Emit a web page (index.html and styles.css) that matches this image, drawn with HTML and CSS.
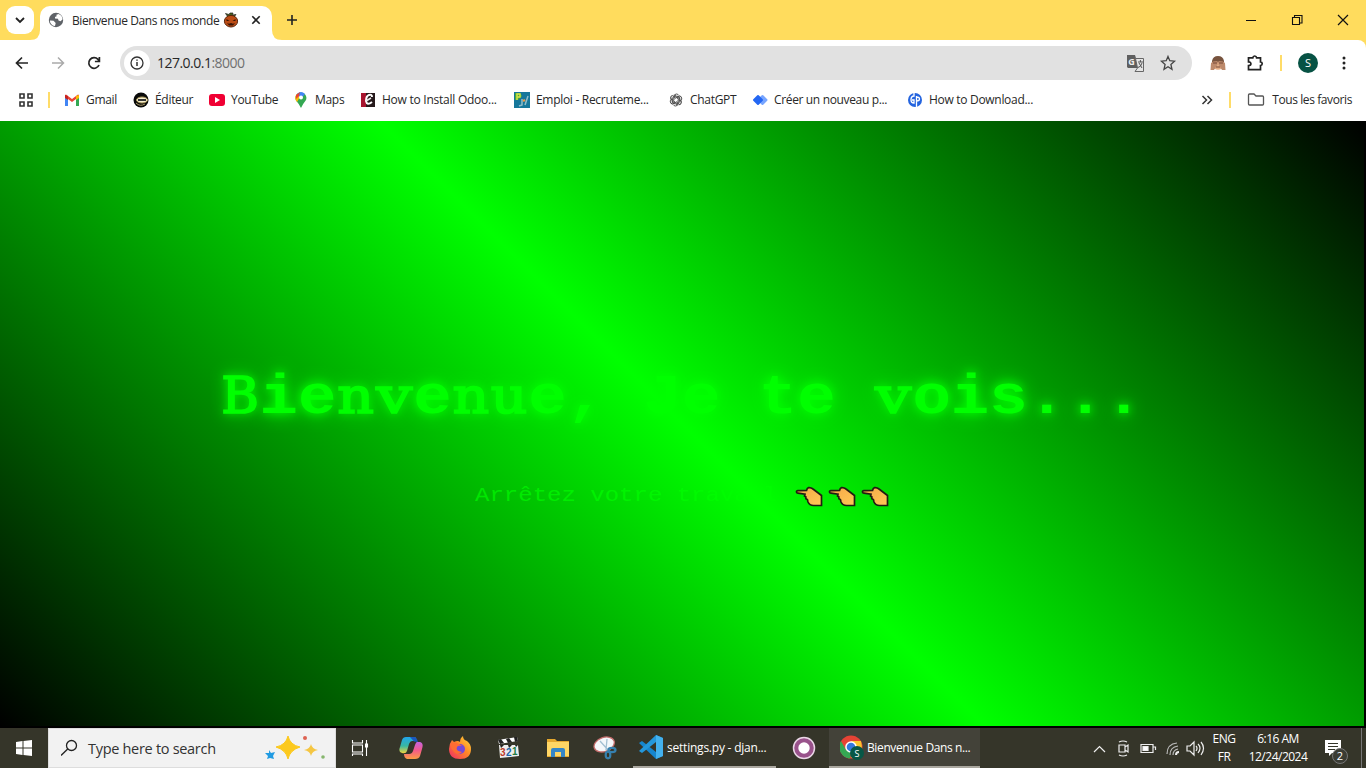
FILE: index.html
```
<!DOCTYPE html>
<html lang="fr">
<head>
<meta charset="utf-8">
<title>Bienvenue Dans nos monde</title>
<link rel="stylesheet" href="styles.css">
</head>
<body>
<div class="screen">
<header class="tabs">
  <div class="tab-search"><svg width="28" height="28" fill="none" stroke="#222" stroke-width="1.8"><path d="M10 12l4 4 4-4"/></svg></div>
  <div class="tab">
    <svg width="16" height="16" viewBox="0 0 16 16"><circle cx="8" cy="8" r="7.2" fill="#5f6368"/><path d="M2 8.5l3.5.2 2.2 2.2-.7 3C4 14 1.800 11 2 8.500zM8 3l2.500-1c3 1 4 3 4 5.500l-2 1.800-2-.8-.5-1.700-3-.3 0-1.500 2-1z" fill="#fff"/></svg>
    <span class="tab-title">Bienvenue Dans nos monde</span>
    <svg class="pumpkin" width="16" height="16" viewBox="0 0 16 16"><path d="M5 5L2.500 1.500 6 2.500 7 1h3l-.5 2 3.500-.5L11 5z" fill="#46601b" stroke="#222" stroke-width=".7"/><ellipse cx="8" cy="9.200" rx="6.600" ry="5.800" fill="#bc4c15" stroke="#59240c"/><path d="M3.500 7l3 2H3.500zM12.500 7l-3 2h3zM4 11l2 .8 2-.8 2 .8 2-.8-2 2.500H6z" fill="#381507"/></svg>
    <svg class="tab-close" width="16" height="16" stroke="#222" stroke-width="1.6"><path d="M4.300 4.300l7.400 7.400M11.700 4.300l-7.400 7.400"/></svg>
    <svg class="curve curve-left" width="10" height="10"><path d="M10 0v10H0Q10 10 10 0" fill="#fff"/></svg>
    <svg class="curve curve-right" width="10" height="10"><path d="M0 0v10h10Q0 10 0 0" fill="#fff"/></svg>
  </div>
  <svg class="new-tab" width="16" height="16" stroke="#222" stroke-width="1.6"><path d="M8 3v10M3 8h10"/></svg>
  <div class="window-buttons">
    <svg width="46" height="40"><path d="M18 20.500h10" stroke="#111"/></svg>
    <svg width="46" height="40" fill="none" stroke="#111" stroke-width="1.100"><path d="M18.500 17.500h7v7h-7zM20.500 17.500v-2h7.500v7.500h-2.500"/></svg>
    <svg width="46" height="40" stroke="#111" stroke-width="1.200"><path d="M18 15l10 10M28 15l-10 10"/></svg>
  </div>
</header>
<nav class="toolbar">
  <svg class="nav-icon" width="36" height="36" fill="none" stroke="#252525" stroke-width="1.700"><path d="M24 18H13M18 12.500L12.500 18l5.500 5.500"/></svg>
  <svg class="nav-icon" width="36" height="36" fill="none" stroke="#aaa" stroke-width="1.500"><path d="M12 18h11M18 12.500l5.500 5.500-5.500 5.500"/></svg>
  <svg class="nav-icon" width="36" height="36" fill="none" stroke="#252525" stroke-width="1.700"><path d="M23 20A5.300 5.300 0 1 1 22 14.400l1 1.300M23.400 12v4.500h-4.500"/></svg>
  <div class="address">
    <span class="info"><svg width="26" height="26" fill="none" stroke="#333" stroke-width="1.300"><circle cx="13" cy="13" r="6"/><path d="M13 12v4M13 9.500v1.300" stroke-width="1.500"/></svg></span>
    <span class="url">127.0.0.1<em>:8000</em></span>
    <svg class="translate" width="17" height="17" viewBox="0 0 17 17"><path d="M0 0h8l4 13H1L0 12z" fill="#5f5f5f"/><path d="M8.500 3.500h8v13H8L10.500 13z" fill="#e5e5e5" stroke="#666"/><path d="M11 7h5M13.400 5v2M12 8l3 5M15 8q-1 4-4 4.500" fill="none" stroke="#555"/><text x="1.200" y="10" class="translate-g">G</text></svg>
    <svg class="star" width="18" height="18" fill="none" stroke="#454545" stroke-width="1.300"><path d="M9 2.500l1.800 4.200 4.700.5-3.600 3.200 1.100 4.900L9 12.800l-4 2.500 1.100-4.900-3.600-3.200 4.700-.5z"/></svg>
  </div>
  <svg class="monkey" width="18" height="18" viewBox="0 0 18 18"><path d="M3 7Q4 2 9 2t6 5v7H3z" fill="#77533e"/><ellipse cx="9" cy="12" rx="5" ry="3.800" fill="#e2ac85"/><path d="M1.500 16l.500-7 2-1.500L8.500 7v3.500L5 16zM16.500 16L16 9l-2-1.500L9.500 7v3.500L13 16z" fill="#bd8a6c"/><path d="M4 9h4M10 9h4M7 13h4" stroke="#764837"/></svg>
  <svg class="puzzle" width="18" height="18" fill="none" stroke="#222" stroke-width="1.700"><path d="M2.500 3.800h4.300Q7 2 8.700 2t1.900 1.800h3.900v4.100q1.700.2 1.700 1.800t-1.700 1.800v4.200h-12v-4q2.400 0 2.400-1.900T2.500 7.900z"/></svg>
  <i class="divider"></i>
  <span class="avatar">S</span>
  <svg class="kebab" width="6" height="18"><g fill="#222"><circle cx="3" cy="4" r="1.500"/><circle cx="3" cy="9" r="1.500"/><circle cx="3" cy="14" r="1.500"/></g></svg>
</nav>
<nav class="bookmarks">
  <svg class="apps" width="16" height="16" fill="none" stroke="#333" stroke-width="1.600"><path d="M2 2h4v4H2zM10 2h4v4h-4zM2 10h4v4H2zM10 10h4v4h-4z"/></svg>
  <i class="divider"></i>
  <a class="bm gmail"><svg width="16" height="16"><path d="M1 3v11h3V7l4 3 4-3v7h3V3l-1-.5L8 7 2 2.500z" fill="#ea4335"/><path d="M1 4v10h3V7z" fill="#4285f4"/><path d="M12 7v7h3V4z" fill="#34a853"/><path d="M12 4l3-1v3l-3 2z" fill="#fbbc04"/><path d="M1 3l3 1v4L1 6z" fill="#c5221f"/></svg><span>Gmail</span></a>
  <a class="bm editeur"><svg width="16" height="16"><circle cx="8" cy="8" r="7.500" fill="#090909"/><ellipse cx="9" cy="8" rx="5.500" ry="3" fill="#f7efcf" stroke="#a49255"/><path d="M5 7h8v2H5z" fill="#333"/><path d="M3 11q4 4 9 1" fill="none" stroke="#aa9966"/></svg><span>Éditeur</span></a>
  <a class="bm youtube"><svg width="16" height="16"><rect y="2" width="16" height="12" rx="3" fill="#f00033"/><path d="M6 5l5 3-5 3z" fill="#fff"/></svg><span>YouTube</span></a>
  <a class="bm maps"><svg width="16" height="16"><path d="M3 8.500A5.500 5.500 0 1 1 13 8q-2.500 3-5 8-1.500-3.500-5-7.500z" fill="#34a853"/><path d="M3 8.500A5.500 5.500 0 0 1 4 2l3 3-3 5z" fill="#fbbc04"/><path d="M4 2q4-4 8 0L8 7z" fill="#4285f4"/><path d="M3 3l4-3-1 4-3 3z" fill="#ea4335"/><circle cx="8" cy="5.500" r="2" fill="#fff"/></svg><span>Maps</span></a>
  <a class="bm odoo"><svg width="16" height="16"><path d="M1 1h14v14H1z" fill="#26191b"/><path d="M1 1h5v14H1z" fill="#a8152f"/><path d="M12 5q0-3-3-2-3 1-3 6 1 5 6 1" stroke="#fff" stroke-width="2" fill="none"/><path d="M6 9l5-3" stroke="#eee" stroke-width="1.500"/></svg><span>How to Install Odoo...</span></a>
  <a class="bm emploi"><svg width="16" height="16"><path d="M0 0h16v16H0z" fill="#16779b"/><path d="M1 1h5l2 3-4 4H1z" fill="#4daa38"/><path d="M3 8V2h3v3H3" fill="none" stroke="#d8e44b" stroke-width="1.500"/><path d="M8 7v6l-3 1M11 13l3-9" fill="none" stroke="#91bdcb" stroke-width="1.500"/><path d="M9 9l2-1" stroke="#ed9b40" stroke-width="2"/></svg><span>Emploi - Recruteme...</span></a>
  <a class="bm chatgpt"><svg width="16" height="16" viewBox="0 0 16 16"><g fill="none" stroke="#444" stroke-width=".9"><path id="petal" d="M6 8V4.500q0-2.500 2.500-2.500 1.500 0 2.500 1.500M6 5.500L9 4l3 1.700"/><use href="#petal" transform="rotate(60 8 8)"/><use href="#petal" transform="rotate(120 8 8)"/><use href="#petal" transform="rotate(180 8 8)"/><use href="#petal" transform="rotate(240 8 8)"/><use href="#petal" transform="rotate(300 8 8)"/></g></svg><span>ChatGPT</span></a>
  <a class="bm creer"><svg width="16" height="16"><path d="M10.500 4l4 4-4 4-4-4z" fill="#77a5ff" stroke="#77a5ff" stroke-width="2" stroke-linejoin="round"/><path d="M6 4l4 4-4 4-4-4z" fill="#2467f3" stroke="#2467f3" stroke-width="2" stroke-linejoin="round"/></svg><span>Créer un nouveau p...</span></a>
  <a class="bm download"><svg width="16" height="16"><circle cx="8" cy="8" r="7" fill="#2464df"/><path d="M7 1v3Q4 4 4 8q0 3 3 3V8H5M9.500 15V4M9.500 5q3 0 3 2t-3 2" fill="none" stroke="#fff" stroke-width="1.300"/></svg><span>How to Download...</span></a>
  <div class="bm-end"><svg width="12" height="12" fill="none" stroke="#333" stroke-width="1.500"><path d="M1.500 2l4 4-4 4M6.500 2l4 4-4 4"/></svg><i class="divider"></i><svg class="folder" width="18" height="14" fill="none" stroke="#555" stroke-width="1.300"><path d="M1.500 2q0-1 1-1H7l2 2h6.500q1 0 1 1v7q0 1-1 1h-13q-1 0-1-1z"/></svg><span>Tous les favoris</span></div>
</nav>
<main class="page">
  <h1><b class="cap">B</b>ie<b>n</b><b class="v">v</b>e<b>n</b><b>u</b>e, Je te <b class="v">v</b>ois...</h1>
  <p><span>Arrêtez votre travail&nbsp;</span><svg class="hands" width="99" height="24" viewBox="0 0 99 24"><defs><linearGradient id="skin" x2="1" y2="1"><stop stop-color="#f5a548"/><stop offset="1" stop-color="#ffc955"/></linearGradient><path id="hand" d="M3 5.600q-1.800.2-1.500 1.500.2 1 1.500 1.100l7 1-.5 1.800 1.300.8.100 2 1.500.7.600 2.500q1.500 3.500 5.500 3.500H26.500V10.500L18 4Q16 2.300 13.500 2.600 12 3 11.500 5.500z" fill="url(#skin)" stroke="#211d12" stroke-width="1.700"/></defs><use href="#hand"/><use href="#hand" x="33"/><use href="#hand" x="66"/></svg></p>
</main>
<footer class="taskbar">
  <div class="start"><svg width="16" height="16" fill="#fff"><path d="M0 2l6.500-.9v6.400H0zM7.500 1L16 0v7.500H7.500zM0 8.500h6.500v6.400L0 14zM7.500 8.500H16V16l-8.500-1z"/></svg></div>
  <div class="search"><svg width="18" height="18" fill="none" stroke="#222" stroke-width="1.300"><circle cx="10.500" cy="6.500" r="5"/><path d="M6.700 10L0 16.500"/></svg><span>Type here to search</span><svg class="sparkles" width="62" height="26"><path d="M23 1q2 9 12 11-10 3-12 12-2-9-12-12 10-2 12-11z" fill="#fcc91e" stroke="#fcc91e" stroke-linejoin="round"/><path d="M46 9q1 5 7 6-6 1-7 6-1-5-7-6 6-1 7-6z" fill="#f5c642"/><path d="M4 15l2 3 4-1-2 4 1 3-4-1-3 1 1-3-3-3 4 0z" fill="#219be2"/><circle cx="40" cy="3" r="2" fill="#dd6252"/><circle cx="58" cy="22" r="1.800" fill="#86b66d"/></svg></div>
  <div class="pins">
    <svg width="18" height="18" fill="none" stroke="#fff" stroke-width="1.100"><path d="M1.500 1v3h10V1M1.500 6h10v7h-10zM1.500 17v-2h10v2M15.500 1v16"/><path d="M14.500 5h2v3h-2z" fill="#fff"/></svg>
    <svg class="copilot" width="24" height="24"><defs><linearGradient id="cp1" x2="0" y2="1"><stop stop-color="#21a5eb"/><stop offset=".55" stop-color="#38b7a2"/><stop offset="1" stop-color="#f3d43c"/></linearGradient><linearGradient id="cp2" x2="0" y2="1"><stop stop-color="#c463e2"/><stop offset=".5" stop-color="#f45b88"/><stop offset="1" stop-color="#fb9d43"/></linearGradient></defs><path d="M7 1h8q3 0 2 4h-4q-2 0-3 3L8 15q-1 3-5 2-4-1-2-6L3 4q1-3 4-3z" fill="url(#cp1)"/><path d="M11 1h5q2 1 3 5l-4-.5z" fill="#1b58bd"/><path d="M18 6h3q4 1 2 7l-2 7q-1 3-5 3H8q-3-1-3-5h5q3 0 4-3l2-6q1-3 2-3z" fill="url(#cp2)"/></svg>
    <svg width="24" height="24"><defs><linearGradient id="ff" x1="1" x2="0" y2="1"><stop stop-color="#ffdf3a"/><stop offset=".45" stop-color="#ff8827"/><stop offset="1" stop-color="#f02867"/></linearGradient></defs><path d="M15 0q0 4 4 5 4 3 4 8 0 10-11 10T1 13q0-5 3-9l2 2q4-2 6 0 0-4 3-6z" fill="url(#ff)"/><circle cx="12" cy="13" r="5" fill="#7549d6"/><path d="M2 8q5-3 9 0l3 2q-4-1-5 1-2 4 5 5-4 4-8 0-3-3-4-8z" fill="#ff6c32"/></svg>
    <svg width="24" height="24"><path d="M2 9h19l1 11-19 2z" fill="#eee"/><path d="M1 4l19-3 1 4L2 8z" fill="#fff"/><path d="M1 4l3-1 3 4-4 1zM9 3l3-1 3 4-4 1zM17 1l3 0 1 4-3 1zM3 9h4l-3 3zM11 9h4l-3 3zM18 9h3l-2 2z" fill="#222"/><g class="clap"><text x="3" y="20" fill="#bd3b26">3</text><text x="9" y="20" fill="#1d68ab">2</text><text x="15" y="19" fill="#207b41">1</text></g></svg>
    <svg width="24" height="24"><path d="M1 3h8l2 2h12v16H1z" fill="#e5a82e"/><path d="M1 6h22v14H1z" fill="#ffd665"/><path d="M5 21v-7q0-2 2-2h10q2 0 2 2v7h-4v-5H9v5z" fill="#3686c6"/></svg>
    <svg class="snip" width="26" height="24"><ellipse cx="12" cy="8.500" rx="10.500" ry="7" transform="rotate(-20 12 8)" fill="#f4f7fa" stroke="#c46d6c" stroke-width="1.300"/><path d="M8 5l9 10M15 3l-1 11" stroke="#a3bfd2" stroke-width="1.300"/><g fill="none" stroke="#3680af" stroke-width="2.200"><ellipse cx="20" cy="14" rx="3.500" ry="2.200"/><ellipse cx="16" cy="19" rx="2.300" ry="3.300"/></g></svg>
  </div>
  <div class="task vscode"><svg width="24" height="24"><path d="M17 0l7 3v18l-7 3L0 8l3-2 14 11z" fill="#1686ce"/><path d="M17 0v7L3 18l-3-2z" fill="#2498dc"/><path d="M17 0l7 3v18l-7 3z" fill="#43b1ee"/></svg><span>settings.py - djan...</span></div>
  <div class="ring"><svg width="24" height="24"><circle cx="12" cy="12" r="10.500" fill="#99528b" stroke="#ead7e6" stroke-width="1.500"/><circle cx="12" cy="12" r="5.700" fill="#fff"/></svg></div>
  <div class="task chrome"><svg width="26" height="26"><circle cx="11" cy="13" r="11.500" fill="#e64335"/><path d="M1 7l5 9 5 2-1 6.500A11.500 11.500 0 0 1 1 7z" fill="#35a853"/><path d="M11 7h10q3 10-5 16l-5 1 5-8z" fill="#fbc52d"/><circle cx="11" cy="13" r="5.800" fill="#fff"/><circle cx="11" cy="13" r="4.300" fill="#3478dd"/><circle cx="17" cy="19" r="7" fill="#075746"/><text class="chrome-s" x="14.500" y="22.500">S</text></svg><span>Bienvenue Dans n...</span></div>
  <div class="tray">
    <svg width="112" height="20" fill="none" stroke="#eee" stroke-width="1.200"><path d="M1 14l5.500-5.500L12 14M26 7h6v7h-6zM32 9l3-2v7l-3-2M26 4q4-2 8 0M26 17q4 2 8 0M48 6.500h12v8H48zM60.500 9h2v3"/><path d="M50 8.500h5v4h-5z" fill="#fff"/><path d="M74 16Q74 6 84 5M77 17q0-8 8-9M80 17q0-5 5-6" stroke="#bbb"/><path d="M83 17q0-3 3-3" stroke-width="2"/><path d="M94 8h3l4-4v13l-4-4h-3zM103 8q2 2 0 5M105 6q4 4 0 9M108 4q5 6 0 13"/></svg>
    <div class="lang">ENG<br>FR</div>
    <div class="clock"><span>6:16 AM</span><br><span>12/24/2024</span></div>
    <div class="notice"><svg width="26" height="26"><path d="M1 1h16v13H8l-3 3v-3H1z" fill="#fff"/><path d="M4 4.500h10M4 7.500h10M4 10.500h7" stroke="#34352a"/><circle cx="16" cy="17" r="7.500" fill="#3b3c34" stroke="#777"/><text x="12.700" y="21" class="count">2</text></svg></div>
    <i class="desktop-edge"></i>
  </div>
</footer>
</div>
</body>
</html>
```
FILE: styles.css
```
* { box-sizing: border-box; }
body { margin: 0; overflow: hidden; font: 12px "Open Sans", "Noto Sans", sans-serif; color: #282828; }
svg { display: block; flex: none; }
span { white-space: nowrap; }
.screen { width: 1366px; height: 768px; display: flex; flex-direction: column; background: #000; }
.tabs { height: 40px; flex: none; background: #ffdc5d; display: flex; padding-left: 6px; }
.tab-search { width: 28px; height: 28px; margin-top: 6px; background: #fff; border-radius: 9px; }
.tab { position: relative; width: 232px; height: 34px; margin: 6px 0 0 6px; padding: 0 8px; background: #fff; border-radius: 10px 10px 0 0; display: flex; align-items: center; padding-bottom: 6px; }
.tab-title { margin-left: 8px; width: 151px; font-size: 12px; letter-spacing: -.4px; }
.tab-close { margin-left: 9px; }
.curve { position: absolute; bottom: 0; }
.curve-left { left: -10px; }
.curve-right { right: -10px; }
.new-tab { margin: 12px 0 0 12px; }
.window-buttons { display: flex; margin-left: auto; }
.toolbar { height: 46px; flex: none; background: #fff; display: flex; align-items: center; padding: 0 0 0 4px; border-top-right-radius: 8px; box-shadow: 8px -8px 0 #ffdc5d; clip-path: inset(0); }
.address { width: 1072px; height: 34px; margin-left: 8px; border-radius: 17px; background: #e1e1e1; display: flex; align-items: center; padding: 0 15px 0 4px; }
.info { background: #fff; border-radius: 50%; }
.url { margin-left: 7px; margin-top: -2px; font-size: 14px; letter-spacing: -.52px; }
.url em { font-style: normal; color: #707070; }
.translate { margin-left: auto; margin-right: 15px; }
.translate-g { font: bold 9px "Open Sans", sans-serif; fill: #eee; }
.monkey { margin-left: 17px; }
.puzzle { margin-left: 19px; }
.divider { width: 2px; height: 16px; background: #ffdc68; flex: none; }
.toolbar .divider { margin-left: 16px; }
.avatar { width: 20px; height: 20px; margin-left: 16px; border-radius: 50%; background: #075244; color: #fff; font-size: 11px; line-height: 20px; text-align: center; }
.kebab { margin-left: 23px; }
.bookmarks { height: 35px; flex: none; background: #fff; display: flex; align-items: center; padding: 0 14px 7px 18px; }
.bookmarks > .divider { margin: 0 14px; }
.bm { display: flex; align-items: center; gap: 6px; flex: none; letter-spacing: -.3px; }
.bm span, .bm-end span { margin-top: -1px; }
.gmail { width: 69px; }
.editeur { width: 76px; }
.youtube { width: 84px; }
.maps { width: 67px; }
.odoo { width: 154px; letter-spacing: -.25px; }
.emploi { width: 154px; }
.chatgpt { width: 84px; }
.creer { width: 155px; letter-spacing: -.35px; }
.bm-end { margin-left: auto; display: flex; align-items: center; letter-spacing: -.4px; }
.bm-end .divider { margin: 0 16px; }
.folder { margin-right: 7px; }
.page { width: 1364px; height: 605px; flex: none; display: flex; flex-direction: column; align-items: center; padding-top: 239px; background: linear-gradient(45deg, #000, #0f0, #000); color: #0f0; font-family: "Liberation Mono", monospace; }
h1 { margin: 0; height: 72px; font: bold 64px/72px "Courier New", "Liberation Mono", monospace; white-space: nowrap; text-shadow: 0 0 10px #0f0, 0 0 20px #0f0; transform: scaleY(.87); }
h1 b { display: inline-flex; justify-content: center; width: 38.4px; height: 72px; vertical-align: baseline; font: 400 57px/72px "DejaVu Serif", serif; -webkit-text-stroke: 2px #0f0; }
h1 .cap { transform: scaleX(.9); }
h1 .v { transform: scaleX(1.12); }
.page p { margin: 52px 0 0 2px; height: 24px; display: flex; align-items: center; font-size: 24px; line-height: 24px; color: #0f0; }
.page p span { transform: scaleY(.87); opacity: .65; }
.hands { margin: 2px -3px 0 3px; }
.taskbar { height: 40px; margin-top: 2px; flex: none; display: flex; background: #353529; color: #fff; }
.start { width: 48px; padding: 12px 16px; }
.search { width: 288px; height: 40px; background: #f2f2f2; border: 1px solid #ddd; display: flex; align-items: center; padding-left: 12px; color: #333; font-size: 14.500px; }
.search span { margin-left: 9px; letter-spacing: -.3px; }
.sparkles { margin-left: auto; margin-right: 8px; }
.pins { display: flex; align-items: center; width: 297px; padding-left: 15px; gap: 25px; }
.copilot { margin-left: 5px; }
.snip { margin-left: -3px; }
.clap { font: bold 10px "Liberation Sans", sans-serif; }
.task { height: 40px; display: flex; align-items: center; border-bottom: 2px solid #aaa79f; font-size: 12px; letter-spacing: -.22px; }
.vscode { width: 143px; padding-left: 6px; gap: 4px; }
.ring { width: 53px; padding: 8px 0 0 16px; }
.chrome { width: 151px; padding-left: 11px; gap: 1px; background: #434239; letter-spacing: -.38px; }
.chrome-s { font: 9px "Open Sans", sans-serif; fill: #fff; }
.tray { margin-left: auto; display: flex; align-items: center; text-align: center; line-height: 18px; font-size: 12px; letter-spacing: -.5px; }
.lang { width: 24px; margin-left: 7px; }
.clock { width: 64px; margin-left: 10px; white-space: nowrap; }
.notice { margin-left: 14px; padding-top: 7px; }
.count { font: 11px "Open Sans", sans-serif; fill: #fff; }
.desktop-edge { width: 1px; height: 40px; margin: 0 4px 0 11px; background: #777; }
```
